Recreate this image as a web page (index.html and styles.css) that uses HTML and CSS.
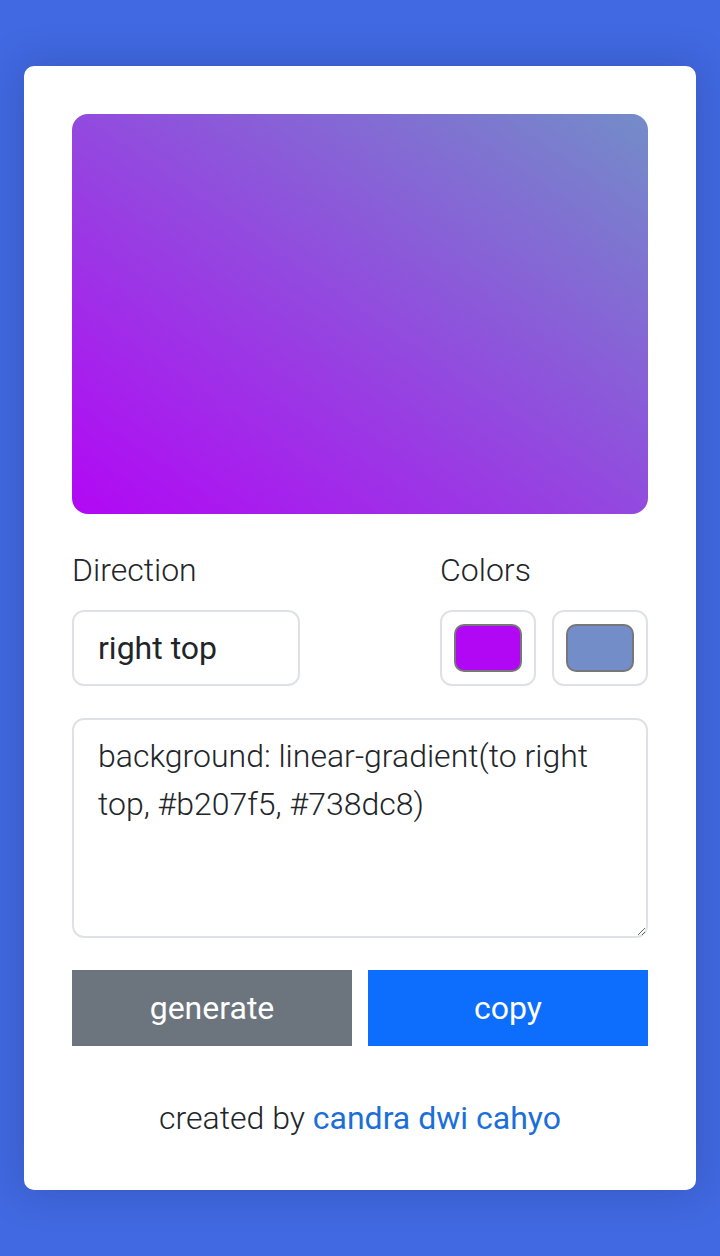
FILE: index.html
```html
<!DOCTYPE html>
<html lang="en">
<head>
<meta charset="utf-8">
<title>Gradient Generator</title>
<link rel="stylesheet" href="styles.css">
</head>
<body>
<main class="card">
  <div class="preview"></div>
  <div class="controls">
    <div class="field">
      <label class="label">Direction</label>
      <div class="select">right top</div>
    </div>
    <div class="field field-colors">
      <label class="label">Colors</label>
      <div class="colors">
        <div class="color-input"><span class="swatch swatch-a"></span></div>
        <div class="color-input"><span class="swatch swatch-b"></span></div>
      </div>
    </div>
  </div>
  <textarea class="code" readonly>background: linear-gradient(to right top, #b207f5, #738dc8)</textarea>
  <div class="actions">
    <button class="btn btn-gray">generate</button>
    <button class="btn btn-blue">copy</button>
  </div>
  <p class="credit">created by <a class="credit-link" href="#">candra dwi cahyo</a></p>
</main>
</body>
</html>
```
FILE: styles.css
```css
* { box-sizing: border-box; }
html, body { height: 100%; }
body {
  margin: 0;
  background: #4169e1;
  font-family: Roboto, "Liberation Sans", sans-serif;
  color: #212529;
  display: flex;
  align-items: center;
  justify-content: center;
  padding: 0 24px;
}
.card {
  width: 672px;
  background: #fff;
  border-radius: 10px;
  padding: 48px;
  box-shadow: 0 0 40px rgba(20, 30, 80, 0.25);
}
.preview {
  height: 400px;
  border-radius: 16px;
  background: linear-gradient(to right top, #b207f5, #738dc8);
}
.controls {
  display: flex;
  justify-content: space-between;
  margin-top: 32px;
}
.label {
  display: block;
  font-size: 32px;
  line-height: 48px;
  font-weight: 300;
  margin-bottom: 16px;
}
.select {
  width: 228px;
  height: 76px;
  border: 2px solid #dee2e6;
  border-radius: 12px;
  padding: 12px 24px;
  font-size: 32px;
  line-height: 48px;
  font-weight: 400;
}
.field-colors { width: 208px; }
.colors { display: flex; gap: 16px; }
.color-input {
  width: 96px;
  height: 76px;
  border: 2px solid #dee2e6;
  border-radius: 12px;
  padding: 12px;
  display: flex;
}
.swatch {
  flex: 1;
  border: 2px solid #777;
  border-radius: 10px;
}
.swatch-a { background: #b207f5; }
.swatch-b { background: #738dc8; }
.code {
  display: block;
  width: 100%;
  height: 220px;
  margin: 32px 0 0;
  border: 2px solid #dee2e6;
  border-radius: 12px;
  padding: 12px 24px;
  font-family: Roboto, "Liberation Sans", sans-serif;
  font-size: 32px;
  line-height: 48px;
  font-weight: 300;
  color: #212529;
  outline: none;
}
.actions {
  display: flex;
  gap: 16px;
  margin-top: 32px;
}
.btn {
  flex: 1;
  height: 76px;
  border: 0;
  border-radius: 0;
  color: #fff;
  font-family: Roboto, "Liberation Sans", sans-serif;
  font-size: 32px;
  line-height: 48px;
  font-weight: 400;
  padding: 12px 24px;
}
.btn-gray { background: #6c757d; }
.btn-blue { background: #0d6efd; }
.credit {
  margin: 48px 0 0;
  text-align: center;
  font-size: 32px;
  line-height: 48px;
  font-weight: 300;
}
.credit-link {
  color: #1a6fd9;
  text-decoration: none;
  font-weight: 400;
}
```
